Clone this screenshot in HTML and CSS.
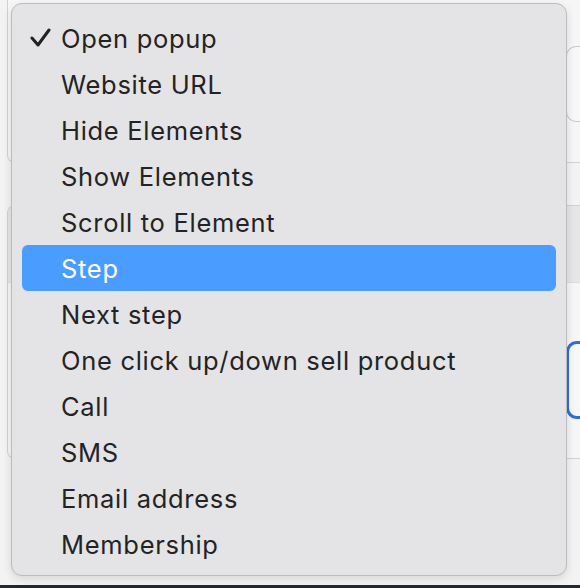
FILE: index.html
```html
<!DOCTYPE html>
<html>
<head>
<meta charset="utf-8">
<link rel="stylesheet" href="styles.css">
</head>
<body>
<div class="page">
  <div class="panel-top">
    <div class="field"></div>
  </div>
  <div class="panel-main">
    <div class="panel-head"></div>
    <div class="panel-body">
      <div class="focus-field"></div>
    </div>
  </div>
  <div class="spacer"></div>
  <div class="desktop"></div>
</div>

<div class="menu">
  <div class="item checked">
    <svg class="check" width="22" height="20" viewBox="0 0 22 20"><polyline points="2,10 8,17 19,2" fill="none" stroke="#222" stroke-width="3" stroke-linecap="round" stroke-linejoin="round"/></svg>
    <span>Open popup</span>
  </div>
  <div class="item"><span>Website URL</span></div>
  <div class="item"><span>Hide Elements</span></div>
  <div class="item"><span>Show Elements</span></div>
  <div class="item"><span>Scroll to Element</span></div>
  <div class="item active"><span>Step</span></div>
  <div class="item"><span>Next step</span></div>
  <div class="item"><span>One click up/down sell product</span></div>
  <div class="item"><span>Call</span></div>
  <div class="item"><span>SMS</span></div>
  <div class="item"><span>Email address</span></div>
  <div class="item"><span>Membership</span></div>
</div>
</body>
</html>
```

FILE: styles.css
```css
html, body {
  margin: 0;
  padding: 0;
}
body {
  width: 580px;
  height: 588px;
  overflow: hidden;
  background: #f3f3f3;
  font-family: Inter, "Liberation Sans", sans-serif;
  position: relative;
}
.page {
  display: flex;
  flex-direction: column;
  width: 580px;
  height: 588px;
  padding-left: 7px;
  box-sizing: border-box;
  overflow: hidden;
}
.panel-top {
  height: 163px;
  box-sizing: border-box;
  border: 1px solid #d2d2d2;
  border-top: none;
  border-right: none;
  border-radius: 0 0 0 8px;
  background: #f6f6f6;
  display: flex;
  padding-top: 46px;
  padding-left: 558px;
}
.field {
  flex: 1;
  height: 76px;
  box-sizing: border-box;
  border: 1px solid #c9c9c9;
  border-right: none;
  border-radius: 10px 0 0 10px;
  background: #f7f7f7;
}
.panel-main {
  margin-top: 42px;
  height: 254px;
  box-sizing: border-box;
  border: 1px solid #d2d2d2;
  border-right: none;
  border-radius: 8px 0 0 8px;
  background: #f6f6f6;
  display: flex;
  flex-direction: column;
  overflow: hidden;
}
.panel-head {
  height: 76px;
  background: #e6e6e6;
  border-bottom: 1px solid #dcdcdc;
}
.panel-body {
  padding-top: 58px;
  padding-left: 558px;
  display: flex;
}
.focus-field {
  flex: 1;
  height: 78px;
  box-sizing: border-box;
  border: 3px solid #2b6fdc;
  border-right: none;
  border-radius: 11px 0 0 11px;
  background: #f7f7f7;
}
.spacer {
  flex: 1;
}
.desktop {
  height: 3px;
  margin-left: -7px;
  background: #1d2b36;
}
.menu {
  position: absolute;
  left: 11px;
  top: 3px;
  width: 556px;
  height: 573px;
  box-sizing: border-box;
  border: 1px solid #bcbcbe;
  border-radius: 11px;
  background: #e4e4e6;
  box-shadow: 0 3px 10px rgba(0, 0, 0, 0.12);
  padding: 11px 10px 0 10px;
  display: flex;
  flex-direction: column;
}
.item {
  height: 46px;
  display: flex;
  align-items: center;
  padding-left: 39px;
  position: relative;
  font-size: 25.5px;
  letter-spacing: 0.7px;
  color: #232325;
  border-radius: 6px;
}
.item.active {
  background: #4a9dfe;
  color: #ffffff;
}
.check {
  position: absolute;
  left: 8px;
  top: 13px;
}
```
